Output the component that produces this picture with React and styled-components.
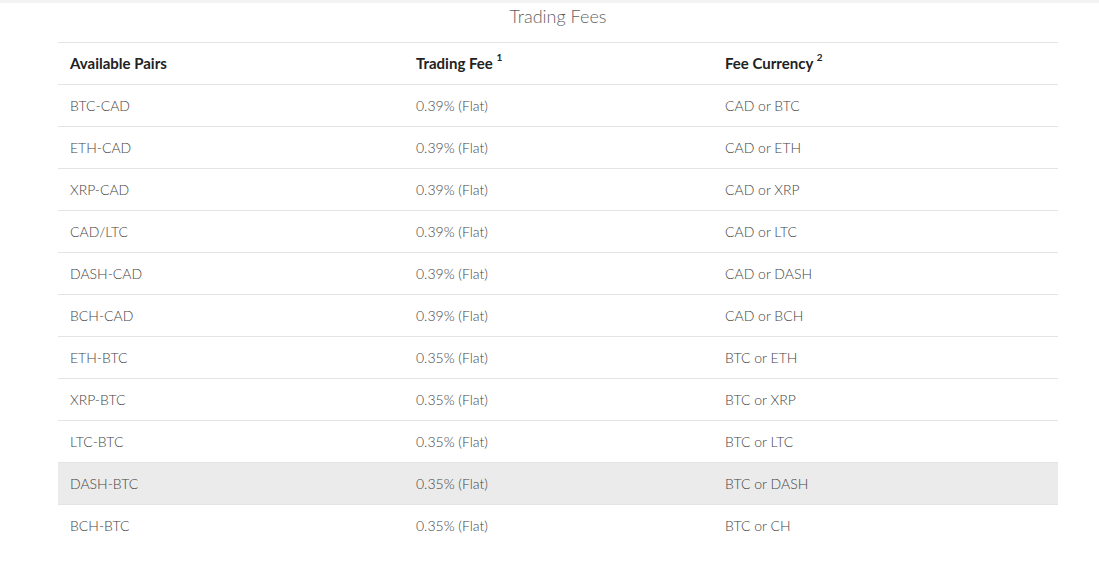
import React from "react";
import styled, { createGlobalStyle } from "styled-components";

const Global = createGlobalStyle`
  html, body { margin: 0; padding: 0; background: #fff; }
  body { font-family: Lato, "Open Sans", sans-serif; }
`;

const Page = styled.div`
  border-top: 3px solid #f3f3f3;
  padding: 0 41px 0 58px;
`;

const Section = styled.section`
  width: 1000px;
`;

const Title = styled.h2`
  margin: 0;
  height: 39px;
  line-height: 27px;
  text-align: center;
  font-weight: 300;
  font-size: 18px;
  color: #5f5f5f;
`;

const Table = styled.div`
  display: grid;
  grid-template-columns: 346px 309px 345px;
  border-top: 1px solid #e4e4e4;
`;

const Row = styled.div`
  display: contents;
  & > div {
    background: ${(p) => (p.$highlight ? "#ebebeb" : "transparent")};
    border-bottom: ${(p) => (p.$last ? "none" : "1px solid #e4e4e4")};
  }
`;

const Cell = styled.div`
  height: ${(p) => (p.$head ? "40px" : "41px")};
  display: flex;
  align-items: center;
  padding: 0 12px ${(p) => (p.$head ? "1px" : "0")} 12px;
  font-size: ${(p) => (p.$head ? "15px" : "14px")};
  font-weight: ${(p) => (p.$head ? 700 : 300)};
  color: ${(p) => (p.$head ? "#222" : "#444")};
  white-space: pre;
`;

const Sup = styled.span`
  font-size: 10px;
  font-weight: 700;
  position: relative;
  top: -6px;
`;

const rows = [
  ["BTC-CAD", "0.39% (Flat)", "CAD or BTC"],
  ["ETH-CAD", "0.39% (Flat)", "CAD or ETH"],
  ["XRP-CAD", "0.39% (Flat)", "CAD or XRP"],
  ["CAD/LTC", "0.39% (Flat)", "CAD or LTC"],
  ["DASH-CAD", "0.39% (Flat)", "CAD or DASH"],
  ["BCH-CAD", "0.39% (Flat)", "CAD or BCH"],
  ["ETH-BTC", "0.35% (Flat)", "BTC or ETH"],
  ["XRP-BTC", "0.35% (Flat)", "BTC or XRP"],
  ["LTC-BTC", "0.35% (Flat)", "BTC or LTC"],
  ["DASH-BTC", "0.35% (Flat)", "BTC or DASH"],
  ["BCH-BTC", "0.35% (Flat)", "BTC or CH"],
];

export default function App() {
  return (
    <>
      <Global />
      <Page>
        <Section>
          <Title>Trading Fees</Title>
          <Table>
            <Row>
              <Cell $head>Available Pairs</Cell>
              <Cell $head>
                {"Trading Fee "}
                <Sup>1</Sup>
              </Cell>
              <Cell $head>
                {"Fee Currency "}
                <Sup>2</Sup>
              </Cell>
            </Row>
            {rows.map((r, i) => (
              <Row key={r[0]} $highlight={i === 9} $last={i === rows.length - 1}>
                {r.map((c, j) => (
                  <Cell key={j}>{c}</Cell>
                ))}
              </Row>
            ))}
          </Table>
        </Section>
      </Page>
    </>
  );
}
